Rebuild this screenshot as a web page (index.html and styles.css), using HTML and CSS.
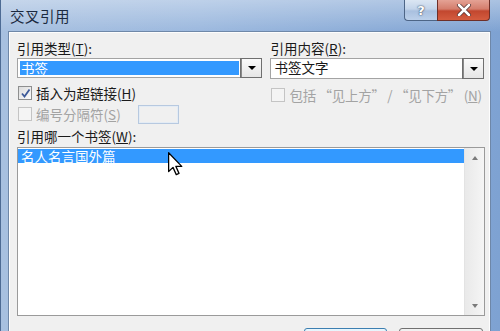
FILE: index.html
```html
<!DOCTYPE html>
<html lang="zh">
<head>
<meta charset="utf-8">
<link rel="stylesheet" href="styles.css">
</head>
<body>
<div class="window">
  <div class="titlebar">
    <div class="title">交叉引用</div>
    <div class="caption-buttons">
      <div class="cbtn help">?</div>
      <div class="cbtn close">
        <svg width="16" height="12" viewBox="0 0 16 12"><path d="M3 1 L13 11 M13 1 L3 11" stroke="#4a2a2a" stroke-width="4" stroke-linecap="round"/><path d="M3 1 L13 11 M13 1 L3 11" stroke="#fff" stroke-width="2.6" stroke-linecap="round"/></svg>
      </div>
    </div>
  </div>
  <div class="body">
    <div class="top">
      <div class="col left">
        <div class="label">引用类型(<u>T</u>):</div>
        <div class="combo">
          <div class="combo-text selected">书签</div>
          <div class="arrow"><span class="tri"></span></div>
        </div>
        <div class="check-row">
          <span class="box checked"><svg width="11" height="11" viewBox="0 0 11 11"><path d="M2 5.5 L4.5 8.5 L9.5 1.5" fill="none" stroke="#3d5a99" stroke-width="1.8"/></svg></span>
          <span class="ctext">插入为超链接(<u>H</u>)</span>
        </div>
        <div class="check-row disabled">
          <span class="box"></span>
          <span class="ctext">编号分隔符(<u>S</u>)</span>
          <span class="textbox"></span>
        </div>
      </div>
      <div class="col right">
        <div class="label">引用内容(<u>R</u>):</div>
        <div class="combo tall">
          <div class="combo-text">书签文字</div>
          <div class="arrow"><span class="tri"></span></div>
        </div>
        <div class="check-row disabled">
          <span class="box"></span>
          <span class="ctext">包括 “见上方” / “见下方” (<u>N</u>)</span>
        </div>
      </div>
    </div>
    <div class="label list-label">引用哪一个书签(<u>W</u>):</div>
    <div class="listbox">
      <div class="items">
        <div class="item selected">名人名言国外篇</div>
      </div>
      <div class="scrollbar">
        <span class="tri up"></span>
        <span class="tri down"></span>
      </div>
    </div>
    <div class="buttons">
      <div class="btn default"></div>
      <div class="btn"></div>
    </div>
  </div>
  <svg class="cursor" width="15" height="24" viewBox="0 0 12 19"><path d="M0.5 0.5 L0.5 15.5 L4 12.2 L6.6 18 L8.8 17 L6.3 11.4 L11 11.4 Z" fill="#fff" stroke="#000" stroke-width="1" stroke-linejoin="round"/></svg>
</div>
</body>
</html>
```
FILE: styles.css
```css
* { box-sizing: border-box; }
html, body { margin: 0; padding: 0; }
body {
  width: 500px;
  height: 331px;
  overflow: hidden;
  font-family: "Noto Sans CJK SC", "Microsoft YaHei", sans-serif;
  font-size: 13.5px;
  color: #1a1a1a;
}
u { text-decoration: underline; }
.window {
  position: relative;
  width: 500px;
  height: 331px;
  background: linear-gradient(to right, #a7c0e0 0%, #9bb8de 40%, #7ea2d2 100%);
  padding: 0 10px 0 8px;
  display: flex;
  flex-direction: column;
  border-left: 1px solid #4d6b94;
}
.window::before {
  content: "";
  position: absolute;
  left: 0; top: 0; right: 0; height: 32px;
  background: linear-gradient(to bottom, rgba(255,255,255,0.35), rgba(255,255,255,0));
  pointer-events: none;
}
.titlebar {
  height: 32px;
  flex-shrink: 0;
  display: flex;
  justify-content: space-between;
  align-items: flex-start;
  position: relative;
}
.title {
  font-size: 14.5px;
  line-height: 16px;
  margin-top: 8px;
  margin-left: 1px;
  color: #1b2a40;
  letter-spacing: 0.5px;
}
.caption-buttons {
  display: flex;
}
.cbtn {
  height: 21px;
  display: flex;
  align-items: center;
  justify-content: center;
  border: 1px solid #4d6586;
  border-top: none;
}
.help {
  width: 33px;
  border-radius: 0 0 0 4px;
  background: linear-gradient(to bottom, #dbe6f3 0%, #c3d4ea 45%, #a9c0df 55%, #bcd0ea 100%);
  color: #fff;
  font-family: "DejaVu Sans", sans-serif;
  font-weight: bold;
  font-size: 13px;
  text-shadow: 0 0 2px #3a4b66, 0 0 1px #3a4b66;
  border-right: none;
}
.close {
  width: 53px;
  border-radius: 0 0 4px 0;
  background: linear-gradient(to bottom, #e4a295 0%, #d47d6c 45%, #c2472f 55%, #d45c3f 100%);
  border-color: #6e2f28;
}
.body {
  flex: 1;
  background: #f0f0f0;
  border: 1px solid #fdfdfd;
  border-bottom: none;
  outline: 1px solid #6e87a8;
  padding: 6px 5px 0 7px;
  display: flex;
  flex-direction: column;
  overflow: hidden;
}
.body > * { flex-shrink: 0; }
.top {
  display: flex;
  gap: 8px;
}
.col { display: flex; flex-direction: column; }
.left { width: 246px; }
.right { width: 214px; }
.label {
  height: 19px;
  line-height: 19px;
  white-space: nowrap;
}
.combo {
  height: 20px;
  display: flex;
  border: 1px solid #a3a3a3;
  background: #fff;
}
.combo.tall { height: 21px; }
.combo-text {
  flex: 1;
  margin: 2px;
  padding-left: 1px;
  line-height: 14px;
}
.right .combo-text { line-height: 15px; margin: 1px 2px; }
.combo-text.selected {
  background: #3399ff;
  color: #fff;
}
.arrow {
  width: 20px;
  border-left: 1px solid #8a8a8a;
  outline: 1px solid #6f6f6f;
  background: linear-gradient(to bottom, #fafafa, #e6e6e6);
  display: flex;
  align-items: center;
  justify-content: center;
}
.tri {
  display: block;
  width: 0; height: 0;
  border-left: 4px solid transparent;
  border-right: 4px solid transparent;
  border-top: 4px solid #000;
}
.check-row {
  display: flex;
  align-items: center;
  height: 20px;
  margin-top: 5px;
  padding-left: 1px;
  white-space: nowrap;
}
.check-row + .check-row { margin-top: 1px; }
.right .check-row { margin-top: 6px; }
.box {
  width: 14px;
  height: 14px;
  border: 1px solid #8e8f8f;
  background: linear-gradient(135deg, #dcdcdc, #fbfbfb);
  margin-right: 4px;
  display: flex;
  align-items: center;
  justify-content: center;
  flex-shrink: 0;
}
.check-row.disabled { color: #a3a3a3; }
.check-row.disabled .box { border-color: #c4c4c4; background: #f4f4f4; }
.ctext { line-height: 16px; }
.right .ctext { letter-spacing: -0.3px; }
.textbox {
  width: 41px;
  height: 19px;
  margin-left: 17px;
  border: 1px solid #b7c9e0;
  background: #f0f0f0;
  outline: 1px solid #e4ecf5;
  outline-offset: -2px;
}
.list-label { margin-top: 3px; }
.listbox {
  margin-top: 1px;
  height: 169px;
  width: 468px;
  border: 1px solid #9a9a9a;
  background: #fff;
  display: flex;
}
.items { flex: 1; padding-top: 1px; }
.item {
  height: 14px;
  line-height: 14px;
  padding-left: 3px;
}
.item.selected { background: #3399ff; color: #fff; }
.scrollbar {
  width: 20px;
  background: linear-gradient(to right, #e9e9e9, #f5f5f5);
  border-left: 1px solid #e3e3e3;
  display: flex;
  flex-direction: column;
  justify-content: space-between;
  align-items: center;
  padding: 8px 0 7px;
}
.scrollbar .tri { border-top-color: #7a7a7a; border-left-width: 3.5px; border-right-width: 3.5px; }
.scrollbar .tri.up { border-top: none; border-bottom: 4px solid #7a7a7a; }
.buttons {
  display: flex;
  justify-content: flex-end;
  gap: 12px;
  margin-top: 12px;
  padding-right: 1px;
}
.btn {
  width: 84px;
  height: 23px;
  border: 1px solid #707070;
  border-radius: 3px;
  background: linear-gradient(to bottom, #f2f2f2, #ebebeb 50%, #dddddd 51%, #cfcfcf);
}
.btn.default {
  border-color: #3c7fb1;
  background: linear-gradient(to bottom, #eaf6fd, #d9f0fc 50%, #bee6fd 51%, #a7d9f5);
  width: 83px;
}
.cursor {
  position: absolute;
  left: 167px;
  top: 152px;
}
```
